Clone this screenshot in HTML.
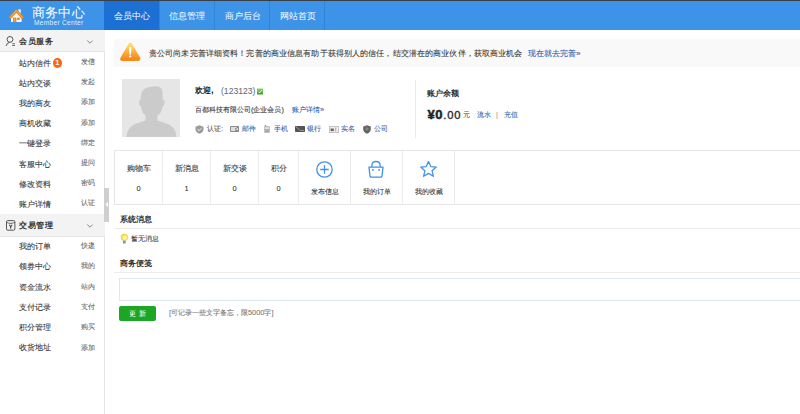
<!DOCTYPE html>
<html><head><meta charset="utf-8">
<style>
*{margin:0;padding:0;box-sizing:border-box}
html,body{width:800px;height:414px;overflow:hidden;background:#fff}
body{position:relative;font-family:"Liberation Sans",sans-serif;color:#333;-webkit-text-stroke-width:0.08px}
#top div{-webkit-text-stroke-width:0}
.sht,[style*="font-weight:bold"]{-webkit-text-stroke-width:0}
.a{position:absolute;white-space:nowrap}
#top{position:absolute;left:0;top:0;width:800px;height:30px;background:#3d93e8;border-top:1px solid #3a3f45}
.nav{position:absolute;top:0;height:29px;line-height:29px;font-size:9.4px;color:#fff;text-align:center}
.sep{position:absolute;top:0;width:1px;height:29px;background:#3282d8}
#side{position:absolute;left:0;top:30px;width:105px;height:384px;background:#fff;border-right:1px solid #e4e4e4}
.sh{position:absolute;left:0;width:105px;height:22px;background:#f3f3f3;border-bottom:1px solid #e6e6e6}
.sht{position:absolute;left:19px;font-size:8.4px;font-weight:bold;color:#3a3a3a;line-height:22px;margin-top:0;letter-spacing:0.6px}
.chev{position:absolute;left:87px;width:6px;height:6px}
.it{position:absolute;left:19px;font-size:8.2px;color:#333;line-height:12px}
.ir{position:absolute;left:80.8px;font-size:7.3px;color:#666;line-height:12px;margin-top:-1.7px}
.blue{color:#2d5fae}
.hline{position:absolute;left:114px;width:686px;height:1px;background:#ececec}
</style></head><body>
<div id="top">
  <svg class="a" style="left:8px;top:6px" width="16" height="16" viewBox="0 0 16 16">
    <rect x="10.2" y="2.4" width="2.6" height="5.6" fill="#f2f2f2"/>
    <path d="M3 10 V15 H13.6 V10 L8.3 5 Z" fill="#f7f7f7"/>
    <path d="M2.3 10.3 L8.3 3.6 L14.4 10.3" fill="none" stroke="#e07c18" stroke-width="2.8" stroke-linejoin="round" stroke-linecap="round"/>
    <path d="M2.3 10.3 L8.3 3.6 L14.4 10.3" fill="none" stroke="#fbbd6a" stroke-width="1" stroke-linejoin="round" stroke-linecap="round"/>
    <rect x="5" y="10.5" width="3.4" height="4.5" fill="#ea8a20"/>
    <rect x="6.5" y="10.5" width="0.5" height="4.5" fill="#f6c080"/>
    <rect x="9.1" y="10.7" width="2.7" height="2.2" fill="#ea8a20"/>
  </svg>
  <div class="a" style="left:32px;top:2.5px;font-size:13.4px;color:#fff;line-height:17px;letter-spacing:0.2px">商务中心</div>
  <div class="a" style="left:34px;top:18px;font-size:6.6px;color:rgba(255,255,255,0.88);line-height:8px;letter-spacing:0.28px">Member Center</div>
  <div class="nav" style="left:104px;width:56px;background:#1d70d3">会员中心</div>
  <div class="sep" style="left:159px"></div>
  <div class="nav" style="left:160px;width:54px">信息管理</div>
  <div class="sep" style="left:214px"></div>
  <div class="nav" style="left:215px;width:55px">商户后台</div>
  <div class="sep" style="left:269px"></div>
  <div class="nav" style="left:270px;width:55px">网站首页</div>
  <div class="sep" style="left:324px"></div>
</div>

<div id="side">
  <div class="sh" style="top:0"></div>
  <svg class="a" style="left:5px;top:6px" width="11" height="11" viewBox="0 0 11 11">
    <circle cx="5" cy="3.4" r="2.9" fill="none" stroke="#555" stroke-width="1"/>
    <path d="M1 10 Q2 6.6 4.6 6.4" fill="none" stroke="#555" stroke-width="1"/>
    <rect x="7.3" y="7.3" width="2.6" height="0.9" fill="#555"/>
    <rect x="7.3" y="9" width="2.6" height="0.9" fill="#555"/>
  </svg>
  <div class="sht" style="top:0">会员服务</div>
  <svg class="chev" style="top:9px" viewBox="0 0 6 4" width="6" height="4"><path d="M0.3 0.5 L3 3.2 L5.7 0.5" fill="none" stroke="#8a8a8a" stroke-width="1"/></svg>
  <div class="a" style="left:53px;top:28.3px;width:8.8px;height:10px;border-radius:50%;background:#fa6512;color:#fff;font-size:7.4px;font-weight:bold;line-height:10px;text-align:center;-webkit-text-stroke-width:0">1</div>

    <div class="it" style="top:27.6px">站内信件</div><div class="ir" style="top:27.6px">发信</div>
  <div class="it" style="top:47.8px">站内交谈</div><div class="ir" style="top:47.8px">发起</div>
  <div class="it" style="top:68.0px">我的商友</div><div class="ir" style="top:68.0px">添加</div>
  <div class="it" style="top:88.2px">商机收藏</div><div class="ir" style="top:88.2px">添加</div>
  <div class="it" style="top:108.4px">一键登录</div><div class="ir" style="top:108.4px">绑定</div>
  <div class="it" style="top:128.6px">客服中心</div><div class="ir" style="top:128.6px">提问</div>
  <div class="it" style="top:148.8px">修改资料</div><div class="ir" style="top:148.8px">密码</div>
  <div class="it" style="top:169.0px">账户详情</div><div class="ir" style="top:169.0px">认证</div>

  <div class="sh" style="top:184px;height:23px"></div>
  <svg class="a" style="left:5px;top:189px" width="11" height="12" viewBox="0 0 11 12">
    <rect x="1.5" y="1.6" width="8.4" height="9.6" rx="1.3" fill="none" stroke="#555" stroke-width="1"/>
    <path d="M1.6 3.5 Q5.7 5.6 9.8 3.5" fill="none" stroke="#555" stroke-width="0.9"/><path d="M2.4 2.4 H9 V3.2 Q5.7 4.6 2.4 3.2Z" fill="#d6d6d6"/>
    <path d="M4.3 5.8 L5.7 7.8 L7.1 5.8 M5.7 7.8 V9.8" fill="none" stroke="#444" stroke-width="1.1"/>
  </svg>
  <div class="sht" style="top:184px">交易管理</div>
  <svg class="chev" style="top:193px" viewBox="0 0 6 4" width="6" height="4"><path d="M0.3 0.5 L3 3.2 L5.7 0.5" fill="none" stroke="#8a8a8a" stroke-width="1"/></svg>
  <div class="it" style="top:210.9px">我的订单</div><div class="ir" style="top:211.8px">快递</div>
  <div class="it" style="top:231.2px">领券中心</div><div class="ir" style="top:232.1px">我的</div>
  <div class="it" style="top:251.5px">资金流水</div><div class="ir" style="top:252.4px">站内</div>
  <div class="it" style="top:271.8px">支付记录</div><div class="ir" style="top:272.7px">支付</div>
  <div class="it" style="top:292.1px">积分管理</div><div class="ir" style="top:293.0px">购买</div>
  <div class="it" style="top:312.4px">收货地址</div><div class="ir" style="top:313.3px">添加</div>
</div>
<!-- collapse toggle -->
<div class="a" style="left:104px;top:188px;width:5px;height:34px;background:#cfcfcf"></div>
<svg class="a" style="left:105px;top:202px" width="3" height="5" viewBox="0 0 3 5"><path d="M3 0 L0.5 2.5 L3 5Z" fill="#fff"/></svg>

<!-- notice -->
<div class="a" style="left:114px;top:39px;width:686px;height:28px;background:#f9f9f9"></div>
<svg class="a" style="left:119px;top:42px" width="23" height="20" viewBox="0 0 23 20">
  <defs><linearGradient id="wg" x1="0" y1="0" x2="0" y2="1"><stop offset="0" stop-color="#ffd86a"/><stop offset="0.45" stop-color="#fdb142"/><stop offset="1" stop-color="#f68a1c"/></linearGradient></defs>
  <path d="M11.3 3.1 L3.3 16.8 H19.3 Z" fill="url(#wg)" stroke="url(#wg)" stroke-width="4.3" stroke-linejoin="round"/>
  <path d="M9.9 5.7 Q9.9 5 11.2 5 Q12.5 5 12.5 5.7 L12 12.7 H10.4 Z" fill="#fff"/>
  <circle cx="11.2" cy="14.5" r="1.05" fill="#fff"/>
</svg>
<div class="a" style="left:149px;top:48px;font-size:8.1px;letter-spacing:0.12px;line-height:12px;color:#333">贵公司尚未完善详细资料！完善的商业信息有助于获得别人的信任，结交潜在的商业伙伴，获取商业机会</div>
<div class="a blue" style="left:528px;top:48px;font-size:8.1px;line-height:12px">现在就去完善»</div>

<!-- profile -->
<div class="a" style="left:122px;top:79px;width:57.5px;height:57.5px;background:#e6e6e6;overflow:hidden">
  <svg width="58" height="58" viewBox="0 0 58 58" style="display:block">
    <path d="M4.5 58 Q5 47 16 44 L23.5 41.5 V36.5 Q19.5 33.5 19 27.5 Q17 27 17 23.5 Q17 20 18.8 20.5 Q18 9 28 8 Q33.5 6.5 38 8.2 Q41.5 10 40.5 20.5 Q42.5 20 42.5 23.5 Q42.5 27 40.5 27.5 Q40 33.5 35.5 36.5 V41.5 L43 44 Q54 47 54.5 58Z" fill="#cbcbcb"/>
  </svg>
</div>
<div class="a" style="left:195px;top:84.2px;font-size:8.3px;line-height:12px;color:#222;font-weight:bold">欢迎<span style="font-size:9.5px">,</span></div>
<div class="a" style="left:221px;top:84.5px;font-size:8.6px;line-height:12px;color:#666;letter-spacing:0px;-webkit-text-stroke-width:0">(123123)</div>
<svg class="a" style="left:257px;top:88px" width="6" height="7" viewBox="0 0 6 7"><defs><linearGradient id="gg" x1="0" y1="0" x2="0" y2="1"><stop offset="0" stop-color="#8fd16a"/><stop offset="1" stop-color="#3c9a2e"/></linearGradient></defs><rect x="0" y="0.5" width="6" height="6" fill="url(#gg)"/><path d="M1.3 3.6 L2.6 4.9 L4.9 2" fill="none" stroke="#fff" stroke-width="0.8"/></svg>
<div class="a" style="left:195px;top:104px;font-size:7.4px;line-height:12px;color:#333">百都科技有限公司(企业会员)</div>
<div class="a blue" style="left:292px;top:104px;font-size:7.4px;line-height:12px">账户详情»</div>

<svg class="a" style="left:195px;top:125px" width="9" height="9" viewBox="0 0 9 9"><path d="M4.5 0.3 L8.5 1.8 V4.5 Q8.3 7.5 4.5 8.8 Q0.7 7.5 0.5 4.5 V1.8Z" fill="#9a9a9a"/><path d="M2.5 4.2 L4.1 5.6 L6.6 3.2" fill="none" stroke="#fff" stroke-width="0.9"/></svg>
<div class="a" style="left:207px;top:123px;font-size:7.4px;line-height:12px;color:#555">认证:</div>
<svg class="a" style="left:230px;top:126px" width="9" height="6" viewBox="0 0 9 6"><rect x="0.4" y="0.4" width="8.2" height="5.2" rx="0.6" fill="#ddd" stroke="#666" stroke-width="0.8"/><path d="M5 3.2 L8.4 1 M5 4 L8.4 5" stroke="#666" stroke-width="0.8"/></svg>
<div class="a blue" style="left:242px;top:123px;font-size:7.4px;line-height:12px">邮件</div>
<svg class="a" style="left:264px;top:125px" width="6" height="8" viewBox="0 0 6 8"><rect x="0.3" y="1.2" width="5.4" height="6.6" rx="0.5" fill="#aaa"/><rect x="0.8" y="0" width="1.4" height="1.5" fill="#999"/><rect x="1.2" y="2.2" width="3.6" height="2" fill="#e6e6e6"/></svg>
<div class="a blue" style="left:274px;top:123px;font-size:7.4px;line-height:12px">手机</div>
<svg class="a" style="left:295px;top:126px" width="10" height="6" viewBox="0 0 10 6"><rect x="0" y="0" width="10" height="6" rx="0.8" fill="#555"/><path d="M1 1 L5.5 4.5 L9 4.5" fill="none" stroke="#aaa" stroke-width="0.8"/></svg>
<div class="a blue" style="left:307px;top:123px;font-size:7.4px;line-height:12px">银行</div>
<svg class="a" style="left:329px;top:126px" width="10" height="7" viewBox="0 0 10 7"><rect x="0.4" y="0.4" width="9.2" height="6.2" fill="#eee" stroke="#bbb" stroke-width="0.8"/><rect x="1.6" y="2.5" width="3.2" height="2.6" fill="#666"/><rect x="6.2" y="1.6" width="1" height="3.8" fill="#aaa"/></svg>
<div class="a blue" style="left:341px;top:123px;font-size:7.4px;line-height:12px">实名</div>
<svg class="a" style="left:363px;top:125px" width="8" height="9" viewBox="0 0 8 9"><path d="M4 0.2 L7.8 1.6 V4.2 Q7.6 7.4 4 8.8 Q0.4 7.4 0.2 4.2 V1.6Z" fill="#666"/><circle cx="4" cy="4" r="1.4" fill="#888"/></svg>
<div class="a blue" style="left:374px;top:123px;font-size:7.4px;line-height:12px">公司</div>

<!-- balance -->
<div class="a" style="left:415px;top:80px;width:1px;height:58px;background:#ebebeb"></div>
<div class="a" style="left:427px;top:87.5px;font-size:8.2px;line-height:12px;color:#333;font-weight:bold">账户余额</div>
<div class="a" style="left:427.5px;top:107.5px;font-size:13px;line-height:14px;color:#222;font-weight:bold;letter-spacing:0.6px;-webkit-text-stroke:0.5px #222">¥0<span style="font-size:11.2px;letter-spacing:0.9px;font-weight:normal;-webkit-text-stroke:0.35px #333">.00</span></div>
<div class="a" style="left:463px;top:109px;font-size:7.4px;line-height:12px;color:#555">元</div>
<div class="a blue" style="left:477px;top:109px;font-size:7.4px;line-height:12px">流水</div>
<div class="a" style="left:496px;top:109px;font-size:7.4px;line-height:12px;color:#999">|</div>
<div class="a blue" style="left:504px;top:109px;font-size:7.4px;line-height:12px">充值</div>

<!-- stats -->
<div class="a" style="left:114px;top:150px;width:686px;height:55px;border-top:1px solid #e6e6e6;border-bottom:1px solid #e6e6e6;border-left:1px solid #e6e6e6"></div>
<div class="a" style="left:162px;top:151px;width:1px;height:53px;background:#ebebeb"></div>
<div class="a" style="left:210px;top:151px;width:1px;height:53px;background:#ebebeb"></div>
<div class="a" style="left:258px;top:151px;width:1px;height:53px;background:#ebebeb"></div>
<div class="a" style="left:298px;top:151px;width:1px;height:53px;background:#ebebeb"></div>
<div class="a" style="left:350px;top:151px;width:1px;height:53px;background:#ebebeb"></div>
<div class="a" style="left:402px;top:151px;width:1px;height:53px;background:#ebebeb"></div>
<div class="a" style="left:454px;top:151px;width:1px;height:53px;background:#ebebeb"></div>

<div class="a" style="left:115px;top:162.5px;width:47px;text-align:center;font-size:8.2px;line-height:12px;color:#333">购物车</div>
<div class="a" style="left:115px;top:183px;width:47px;text-align:center;font-size:7.4px;line-height:12px;color:#333">0</div>
<div class="a" style="left:163px;top:162.5px;width:47px;text-align:center;font-size:8.2px;line-height:12px;color:#333">新消息</div>
<div class="a" style="left:163px;top:183px;width:47px;text-align:center;font-size:7.4px;line-height:12px;color:#333">1</div>
<div class="a" style="left:211px;top:162.5px;width:47px;text-align:center;font-size:8.2px;line-height:12px;color:#333">新交谈</div>
<div class="a" style="left:211px;top:183px;width:47px;text-align:center;font-size:7.4px;line-height:12px;color:#333">0</div>
<div class="a" style="left:259px;top:162.5px;width:39px;text-align:center;font-size:8.2px;line-height:12px;color:#333">积分</div>
<div class="a" style="left:259px;top:183px;width:39px;text-align:center;font-size:7.4px;line-height:12px;color:#333">0</div>

<svg class="a" style="left:315px;top:160px" width="19" height="19" viewBox="0 0 19 19"><circle cx="9.5" cy="9.5" r="7.7" fill="none" stroke="#4291e4" stroke-width="1.3"/><path d="M5.3 9.5 H13.7 M9.5 5.3 V13.7" stroke="#4291e4" stroke-width="1.3"/></svg>
<div class="a" style="left:299px;top:186px;width:51px;text-align:center;font-size:7.2px;line-height:11px;color:#333">发布信息</div>
<svg class="a" style="left:367px;top:160px" width="18" height="18" viewBox="0 0 18 18"><path d="M4.9 7 V5.4 Q4.9 1.5 9 1.5 Q13.1 1.5 13.1 5.4 V7" fill="none" stroke="#4291e4" stroke-width="1.3"/><path d="M2 7.1 H16 L15 16.2 Q14.8 17.2 13.8 17.2 H4.2 Q3.2 17.2 3 16.2Z" fill="none" stroke="#4291e4" stroke-width="1.3" stroke-linejoin="round"/><circle cx="5.9" cy="9.9" r="0.95" fill="#4291e4"/><circle cx="12.1" cy="9.9" r="0.95" fill="#4291e4"/></svg>
<div class="a" style="left:351px;top:186px;width:51px;text-align:center;font-size:7.2px;line-height:11px;color:#333">我的订单</div>
<svg class="a" style="left:418.6px;top:160px" width="19" height="18" viewBox="0 0 19 18"><path d="M9.5 1.5 L11.8 6.6 L17.3 7.1 L13.1 10.8 L14.4 16.3 L9.5 13.4 L4.6 16.3 L5.9 10.8 L1.7 7.1 L7.2 6.6Z" fill="none" stroke="#4291e4" stroke-width="1.3" stroke-linejoin="round"/></svg>
<div class="a" style="left:403px;top:186px;width:51px;text-align:center;font-size:7.2px;line-height:11px;color:#333">我的收藏</div>

<!-- system messages -->
<div class="a" style="left:120px;top:213.5px;font-size:8.2px;line-height:12px;color:#333;font-weight:bold">系统消息</div>
<div class="hline" style="top:228px"></div>
<svg class="a" style="left:120px;top:233px" width="9" height="11" viewBox="0 0 9 11"><defs><radialGradient id="bg1" cx="0.6" cy="0.6" r="0.6"><stop offset="0" stop-color="#fffbe0"/><stop offset="0.5" stop-color="#fdf060"/><stop offset="1" stop-color="#f2d640"/></radialGradient></defs><circle cx="4.4" cy="4.3" r="3.4" fill="url(#bg1)" stroke="#dcb860" stroke-width="0.5"/><rect x="3.1" y="7.7" width="2.5" height="2.8" fill="#6d93ad"/></svg>
<div class="a" style="left:131px;top:233px;font-size:7.2px;line-height:12px;color:#333">暂无消息</div>

<!-- memo -->
<div class="a" style="left:120px;top:258px;font-size:8.2px;line-height:12px;color:#333;font-weight:bold">商务便笺</div>
<div class="hline" style="top:272px"></div>
<div class="a" style="left:119px;top:278px;width:690px;height:23px;border:1px solid #dfe6ee;background:#fff"></div>
<div class="a" style="left:119px;top:306px;width:37px;height:15px;background:#1ca623;border-radius:2px;color:#fff;font-size:7.4px;line-height:15px;text-align:center;letter-spacing:3px;text-indent:3px;-webkit-text-stroke-width:0">更新</div>
<div class="a" style="left:169px;top:307px;font-size:7.35px;line-height:12px;color:#777">[可记录一些文字备忘，限5000字]</div>
</body></html>
